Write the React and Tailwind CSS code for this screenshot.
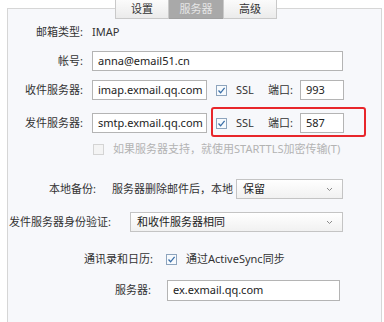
import React from "react";

const font = { fontFamily: '"Noto Sans", "Noto Sans CJK SC", sans-serif' };

function Check({ checked = true, disabled = false }) {
  return (
    <span
      className={
        "flex h-[11px] w-[11px] shrink-0 items-center justify-center border " +
        (disabled ? "border-[#d4d4d4] bg-[#f4f4f4]" : "border-[#8ea4bd] bg-[#f7fafd]")
      }
    >
      {checked && !disabled && (
        <svg width="9" height="9" viewBox="0 0 9 9">
          <polyline points="1.5,4.5 3.6,6.8 7.6,1.8" fill="none" stroke="#3b6fa8" strokeWidth="1.3" />
        </svg>
      )}
    </span>
  );
}

function Input({ value, w }) {
  return (
    <div
      className={"flex h-full items-center border border-[#b4b4b4] bg-white pl-[5px] text-[11px] text-[#222] " + w}
    >
      {value}
    </div>
  );
}

function Select({ value, w }) {
  return (
    <div
      className={
        "flex h-full items-center justify-between border border-[#c4c4c4] bg-gradient-to-b from-white to-[#f1f1f1] pl-[6px] pr-[9px] text-[11px] text-[#222] " +
        w
      }
    >
      <span>{value}</span>
      <svg width="7" height="5" viewBox="0 0 7 5">
        <polyline points="1,1 3.5,3.5 6,1" fill="none" stroke="#8a8a8a" strokeWidth="1" />
      </svg>
    </div>
  );
}

function Label({ children }) {
  return <div className="w-[76px] shrink-0 pr-[1px] text-right text-[11px] text-[#333]">{children}</div>;
}

export default function App() {
  return (
    <div className="relative h-[322px] w-[384px] overflow-hidden bg-white pl-[7px] pt-[8px]" style={font}>
      <div className="flex h-[330px] w-[375px] flex-col border border-[#d6d6d6] bg-[#f7f8fb] text-[11px] text-[#333]">
        {/* 邮箱类型 */}
        <div className="mt-[13px] flex h-[20px] items-center">
          <Label>邮箱类型:</Label>
          <span className="ml-[8px]">IMAP</span>
        </div>
        {/* 帐号 */}
        <div className="mt-[9px] flex h-[20px] items-center">
          <Label>帐号:</Label>
          <div className="ml-[8px] h-full">
            <Input value="anna@email51.cn" w="w-[251px]" />
          </div>
        </div>
        {/* 收件服务器 */}
        <div className="mt-[9px] flex h-[20px] items-center">
          <Label>收件服务器:</Label>
          <div className="ml-[8px] h-full">
            <Input value="imap.exmail.qq.com" w="w-[115px]" />
          </div>
          <div className="ml-[9px] flex h-full items-center">
            <Check />
            <span className="ml-[9px] w-[32px]">SSL</span>
            <span className="w-[32px]">端口:</span>
            <div className="h-full">
              <Input value="993" w="w-[44px]" />
            </div>
          </div>
        </div>
        {/* 发件服务器 */}
        <div className="mt-[13px] flex h-[20px] items-center">
          <Label>发件服务器:</Label>
          <div className="ml-[8px] h-full">
            <Input value="smtp.exmail.qq.com" w="w-[115px]" />
          </div>
          <div className="-mb-[4px] -mt-[6px] ml-[4px] flex h-[30px] items-start rounded-[3px] border-2 border-[#e8262b] pb-[2px] pl-[3px] pr-[20px] pt-[4px]">
            <div className="flex h-[20px] items-center">
              <Check />
              <span className="ml-[9px] w-[32px]">SSL</span>
              <span className="w-[32px]">端口:</span>
              <div className="h-full">
                <Input value="587" w="w-[44px]" />
              </div>
            </div>
          </div>
        </div>
        {/* STARTTLS */}
        <div className="mt-[10px] flex h-[12px] items-center pl-[85px]">
          <Check disabled />
          <span className="ml-[9px] text-[#b3b3b3]">如果服务器支持，就使用STARTTLS加密传输(T)</span>
        </div>
        {/* 本地备份 */}
        <div className="mt-[24px] flex h-[20px] items-center pl-[41px]">
          <span className="w-[63px] shrink-0">本地备份:</span>
          <span className="w-[124px] shrink-0">服务器删除邮件后，本地</span>
          <div className="h-full">
            <Select value="保留" w="w-[107px]" />
          </div>
        </div>
        {/* 发件服务器身份验证 */}
        <div className="mt-[13px] flex h-[20px] items-center pl-[1px]">
          <span className="w-[121px] shrink-0">发件服务器身份验证:</span>
          <div className="h-full">
            <Select value="和收件服务器相同" w="w-[213px]" />
          </div>
        </div>
        {/* 通讯录和日历 */}
        <div className="mt-[17px] flex h-[20px] items-center pl-[76px]">
          <span className="w-[82px] shrink-0">通讯录和日历:</span>
          <Check />
          <span className="ml-[9px]">通过ActiveSync同步</span>
        </div>
        {/* 服务器 */}
        <div className="mt-[11px] flex h-[21px] items-center pl-[107px]">
          <span className="w-[52px] shrink-0">服务器:</span>
          <div className="h-full">
            <Input value="ex.exmail.qq.com" w="w-[173px]" />
          </div>
        </div>
      </div>

      {/* tabs overlapping the panel border */}
      <div className="absolute left-[115px] top-0 flex h-[19px] text-[11px]">
        <div className="flex w-[54px] items-center justify-center border border-t-0 border-[#c9c9c9] bg-gradient-to-b from-[#fbfbfb] to-[#ebebeb] text-[#333]">
          设置
        </div>
        <div className="flex w-[54px] items-center justify-center border-b border-[#a0a0a0] bg-[#a9a9a9] text-[#e6e6e6]">
          服务器
        </div>
        <div className="flex w-[54px] items-center justify-center border border-t-0 border-[#c9c9c9] bg-gradient-to-b from-[#fbfbfb] to-[#ebebeb] text-[#333]">
          高级
        </div>
      </div>
    </div>
  );
}
